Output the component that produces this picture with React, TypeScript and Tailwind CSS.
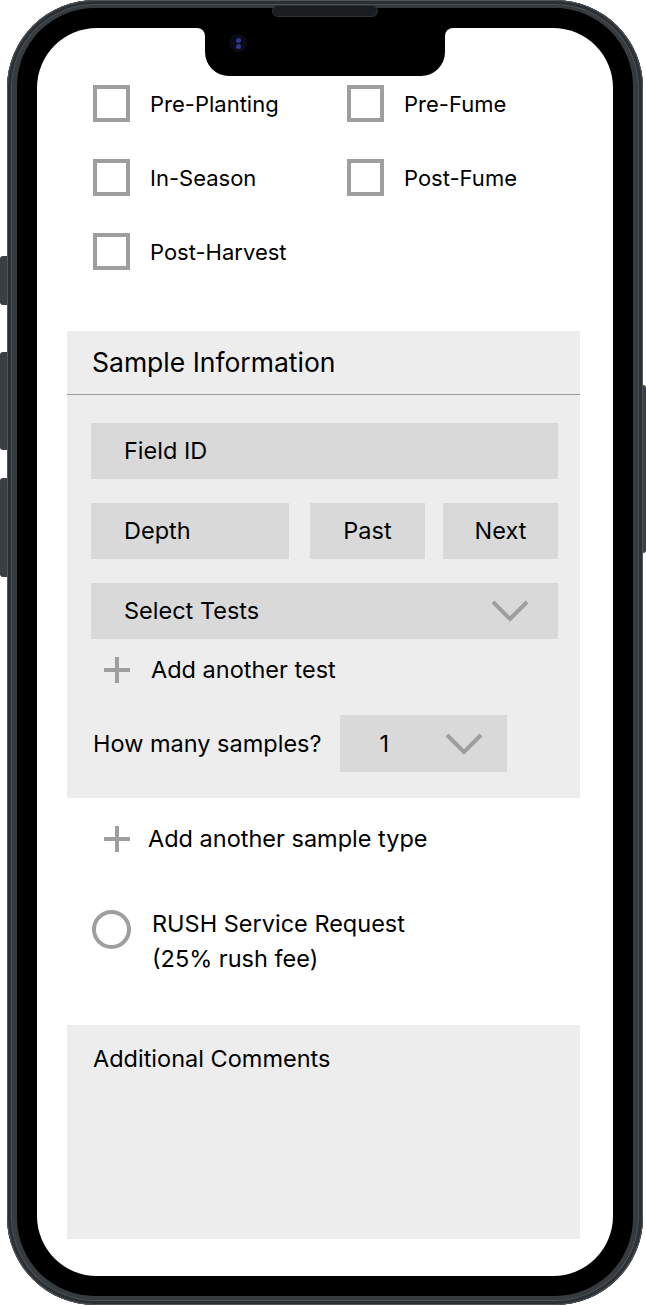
import React from "react";

function Box({ label }: { label: string }) {
  return (
    <div className="flex items-center h-[37px]">
      <div className="w-[37px] h-[37px] border-4 border-[#9e9e9e] shrink-0" />
      <span className="ml-[20px] text-[22px] leading-none text-black">{label}</span>
    </div>
  );
}

function Chevron({ w, h }: { w: number; h: number }) {
  return (
    <svg width={w} height={h} viewBox="0 0 38 22" fill="none">
      <path d="M2 2 L19 19 L36 2" stroke="#9e9e9e" strokeWidth="4" />
    </svg>
  );
}

function Plus() {
  return (
    <svg width="26" height="26" viewBox="0 0 26 26">
      <rect x="11" y="0" width="4" height="26" fill="#9e9e9e" />
      <rect x="0" y="11" width="26" height="4" fill="#9e9e9e" />
    </svg>
  );
}

export default function App() {
  return (
    <div
      className="relative w-[646px] h-[1306px] bg-white overflow-hidden"
      style={{ fontFamily: "Inter, 'Noto Sans', sans-serif" }}
    >
      {/* side buttons */}
      <div className="absolute left-0 top-[256px] w-[8px] h-[49px] rounded-l-[3px] bg-[#3a3f43]" />
      <div className="absolute left-0 top-[352px] w-[8px] h-[98px] rounded-l-[3px] bg-[#3a3f43]" />
      <div className="absolute left-0 top-[478px] w-[8px] h-[99px] rounded-l-[3px] bg-[#3a3f43]" />
      <div className="absolute right-0 top-[385px] w-[5px] h-[168px] rounded-r-[3px] bg-[#3a3f43]" />

      {/* phone body */}
      <div className="relative ml-[7px] w-[636px] h-[1305px] rounded-[88px] bg-[#363b3e] pt-[8px] px-[10px] pb-[9px] shadow-[inset_0_0_0_1px_#50565a,inset_0_0_0_4px_#2c3033,inset_0_0_0_5px_#4a5054]">
        {/* speaker */}
        <div className="absolute left-[265px] top-[5px] w-[106px] h-[12px] rounded-full bg-[#1b1e20] border border-[#2f3336]" />
        <div className="w-full h-full rounded-[78px] bg-black p-[20px]">
          <div className="relative w-[576px] h-[1248px] rounded-[60px] bg-white overflow-hidden">
            {/* notch */}
            <div className="absolute left-[160px] top-0 w-[8px] h-[8px] bg-black">
              <div className="w-full h-full bg-white rounded-tr-[8px]" />
            </div>
            <div className="absolute left-[408px] top-0 w-[8px] h-[8px] bg-black">
              <div className="w-full h-full bg-white rounded-tl-[8px]" />
            </div>
            <div className="absolute left-[168px] top-0 w-[240px] h-[48px] bg-black rounded-b-[24px]">
              <div className="absolute left-[24px] top-[6px] w-[18px] h-[18px] rounded-full bg-[#0a0b16] flex flex-col items-center justify-center gap-[1px]">
                <div className="w-[5px] h-[5px] rounded-full bg-[#2b3a8c]" />
                <div className="w-[5px] h-[5px] rounded-full bg-[#2b3a8c]" />
              </div>
            </div>

            {/* content */}
            <div className="pt-[57px] text-black">
              <div className="pl-[56px] grid grid-cols-[254px_1fr] gap-y-[37px]">
                <Box label="Pre-Planting" />
                <Box label="Pre-Fume" />
                <Box label="In-Season" />
                <Box label="Post-Fume" />
                <Box label="Post-Harvest" />
              </div>

              {/* Sample information panel */}
              <div className="ml-[30px] mt-[61px] w-[513px] bg-[#ededed]">
                <div className="h-[64px] flex items-center pl-[25px] border-b-[1.5px] border-[#999999]">
                  <span className="text-[26.5px] leading-none">Sample Information</span>
                </div>
                <div className="pl-[24px] pr-[22px] pt-[28px] pb-[26px] flex flex-col">
                  <div className="h-[56px] bg-[#d9d9d9] flex items-center pl-[33px] text-[23.5px]">Field ID</div>
                  <div className="mt-[24px] flex">
                    <div className="w-[198px] h-[56px] bg-[#d9d9d9] flex items-center pl-[33px] text-[23.5px]">Depth</div>
                    <div className="ml-[21px] w-[115px] h-[56px] bg-[#d9d9d9] flex items-center justify-center text-[23.5px]">Past</div>
                    <div className="ml-[18px] w-[115px] h-[56px] bg-[#d9d9d9] flex items-center justify-center text-[23.5px]">Next</div>
                  </div>
                  <div className="mt-[24px] h-[56px] bg-[#d9d9d9] flex items-center justify-between pl-[33px] pr-[29px] text-[23.5px]">
                    <span>Select Tests</span>
                    <Chevron w={38} h={22} />
                  </div>
                  <div className="mt-[18px] flex items-center h-[26px] pl-[13px]">
                    <Plus />
                    <span className="ml-[21px] text-[23.5px] leading-none">Add another test</span>
                  </div>
                  <div className="mt-[32px] flex items-center pl-[2px]">
                    <span className="text-[23.5px] leading-none">How many samples?</span>
                    <div className="ml-[18px] w-[167px] h-[57px] bg-[#d9d9d9] flex items-center pl-[40px] pr-[24px] justify-between text-[23.5px]">
                      <span>1</span>
                      <Chevron w={38} h={22} />
                    </div>
                  </div>
                </div>
              </div>

              <div className="mt-[28px] ml-[67px] flex items-center h-[26px]">
                <Plus />
                <span className="ml-[18px] text-[23.5px] leading-none">Add another sample type</span>
              </div>

              <div className="mt-[54px] ml-[55px] flex items-start">
                <div className="mt-[4px] w-[39px] h-[39px] rounded-full border-4 border-[#9e9e9e] shrink-0" />
                <div className="ml-[21px] text-[23.5px] leading-[35px]">
                  <div>RUSH Service Request</div>
                  <div>(25% rush fee)</div>
                </div>
              </div>

              <div className="ml-[30px] mt-[49px] w-[513px] h-[214px] bg-[#ededed] pl-[26px] pt-[20px]">
                <span className="text-[23.5px] leading-[28px]">Additional Comments</span>
              </div>
            </div>
          </div>
        </div>
      </div>
    </div>
  );
}
